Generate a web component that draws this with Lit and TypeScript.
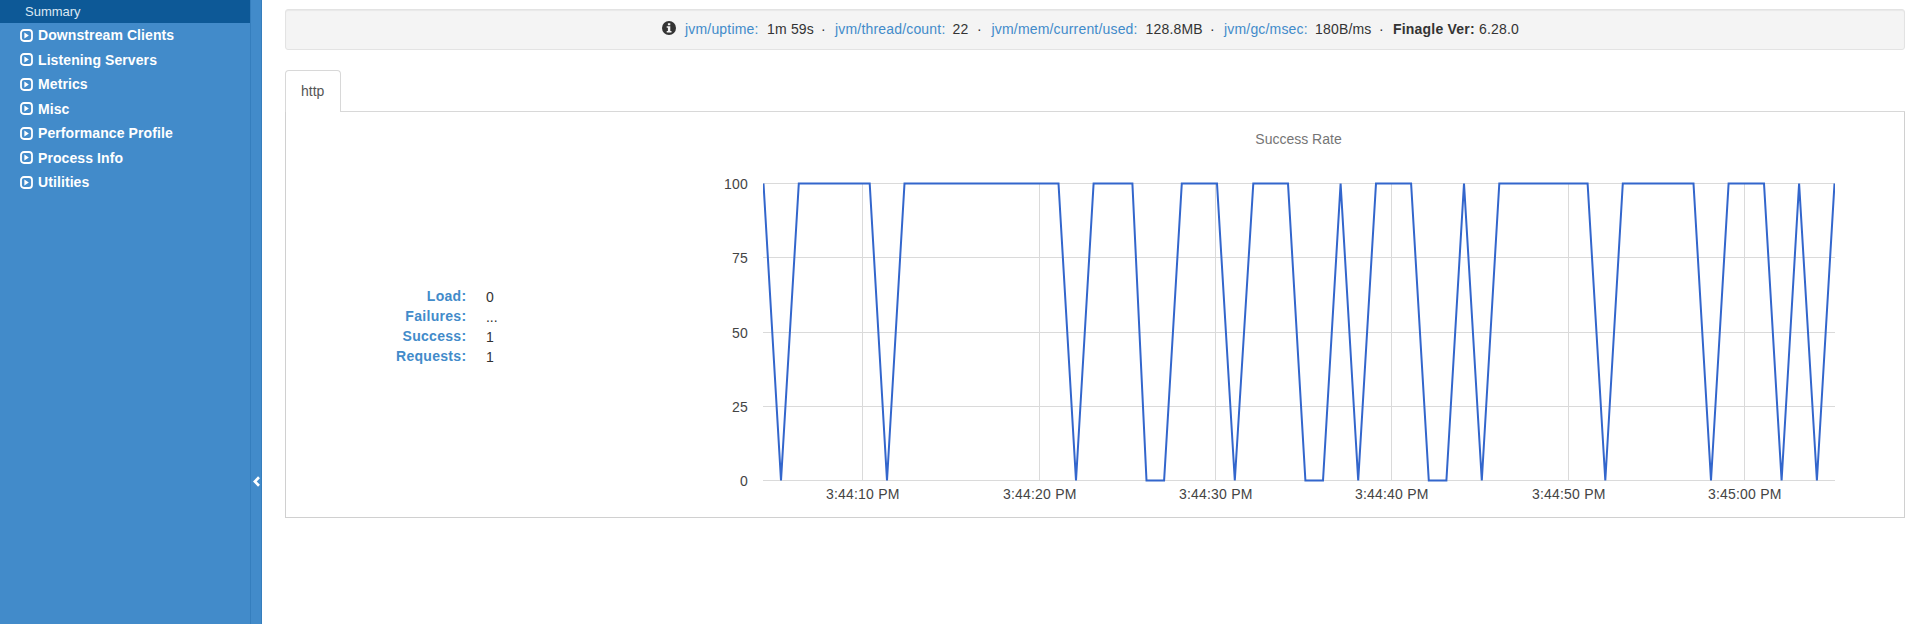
import { LitElement, html, svg, css } from "lit";

const TOP = 183.5;
const BOTTOM = 480.5;

/* [x, success rate] samples along the time axis */
const SAMPLES: [number, number][] = [
  [763.5, 100], [781, 0], [798.8, 100], [869.7, 100], [887, 0], [904.5, 100],
  [1058.5, 100], [1076, 0], [1093.6, 100], [1132.4, 100], [1146.5, 0], [1164.1, 0],
  [1181.8, 100], [1217, 100], [1234.8, 0], [1253.3, 100], [1288, 100], [1305.4, 0],
  [1323, 0], [1340.6, 100], [1358.2, 0], [1376, 100], [1411.1, 100], [1428.8, 0],
  [1446.4, 0], [1464, 100], [1481.8, 0], [1499.3, 100], [1587.6, 100], [1605.3, 0],
  [1622.8, 100], [1693.5, 100], [1711, 0], [1728.6, 100], [1764, 100], [1781.6, 0],
  [1799.1, 100], [1816.9, 0], [1834.5, 100],
];

const X_TICKS: [number, string][] = [
  [862.5, "3:44:10 PM"], [1039.5, "3:44:20 PM"], [1215.5, "3:44:30 PM"],
  [1391.5, "3:44:40 PM"], [1568.5, "3:44:50 PM"], [1744.5, "3:45:00 PM"],
];
const Y_TICKS: [number, string][] = [
  [183.5, "100"], [257.5, "75"], [332.5, "50"], [406.5, "25"], [480.5, "0"],
];

class SideBar extends LitElement {
  static styles = css`
    :host { display: flex; width: 262px; flex: none; background: #428bca; color: #fff; }
    nav { width: 250px; }
    .current {
      height: 23px; background: #0d5997; color: #dce8f3; box-sizing: border-box;
      padding-left: 25px; font-size: 13px; line-height: 23px;
    }
    .items { padding-top: 0.2px; }
    .item {
      display: flex; align-items: center; height: 24.5px; padding-left: 20px; gap: 5px;
      font-size: 14px; font-weight: bold; letter-spacing: 0.09px; line-height: 24px;
    }
    .item svg { display: block; width: 13px; height: 13px; flex: none; }
    .toggle {
      box-sizing: border-box; width: 12px; border-left: 1px solid #357ebd;
      border-right: 1px solid #357ebd; padding: 476px 0 0 2px;
    }
    .toggle svg { display: block; width: 7px; height: 11px; }
  `;
  render() {
    const groups = ["Downstream Clients", "Listening Servers", "Metrics", "Misc",
      "Performance Profile", "Process Info", "Utilities"];
    return html`
      <nav>
        <div class="current">Summary</div>
        <div class="items">
          ${groups.map((g) => html`
            <div class="item">
              <svg viewBox="0 0 13 13">
                <rect x="1" y="1" width="11" height="11" rx="3" fill="none" stroke="#fff" stroke-width="1.8" />
                <path d="M4.4 3.6 L8.8 6.5 L4.4 9.4 Z" fill="#fff" />
              </svg>
              <span>${g}</span>
            </div>`)}
        </div>
      </nav>
      <div class="toggle">
        <svg viewBox="0 0 7 11"><path d="M6 1.3 L1.8 5.5 L6 9.7" fill="none" stroke="#fff" stroke-width="2.7" /></svg>
      </div>`;
  }
}
customElements.define("side-bar", SideBar);

class StatBar extends LitElement {
  static styles = css`
    :host {
      box-sizing: border-box; height: 41px; border: 1px solid #e3e3e3; border-radius: 3px;
      background: #f4f4f4; box-shadow: inset 0 1px 1px rgba(0, 0, 0, 0.05);
      display: grid; align-items: center; padding-left: 376px; white-space: nowrap;
      grid-template-columns: 23px 82px 54px 14px 117.5px 24.5px 14.5px 154px 64.5px 14px 91px 64px 14px 86px 60px;
      font-size: 14px; line-height: 39px; letter-spacing: 0.18px; color: #333;
    }
    .key { color: #428bca; }
    .bold { font-weight: bold; letter-spacing: 0.2px; }
    svg { display: block; width: 14px; height: 14px; margin-top: -3px; }
  `;
  render() {
    const stats = [["jvm/uptime:", "1m 59s"], ["jvm/thread/count:", "22"],
      ["jvm/mem/current/used:", "128.8MB"], ["jvm/gc/msec:", "180B/ms"]];
    return html`
      <svg viewBox="0 0 14 14">
        <circle cx="7" cy="7" r="7" fill="#333" />
        <path d="M5.9 2.2h2.4v2h-2.4z M4.7 5.2h3.6v4.8h1.2v1.6h-4.8v-1.6h1.2v-3.2h-1.2z" fill="#f4f4f4" />
      </svg>
      ${stats.map(([k, v]) => html`<span class="key">${k}</span><span>${v}</span><span>·</span>`)}
      <span class="bold">Finagle Ver:</span><span>6.28.0</span>`;
  }
}
customElements.define("stat-bar", StatBar);

class SuccessChart extends LitElement {
  static styles = css`
    :host { display: block; }
    svg { display: block; width: 1200px; height: 405px; font-size: 14px; letter-spacing: 0.2px; }
    .grid { stroke: #dadada; stroke-width: 1; }
    .line { fill: none; stroke: #3366cc; stroke-width: 2; }
    .tick { fill: #444; }
    .title { fill: #757575; letter-spacing: 0; }
  `;
  render() {
    const points = SAMPLES
      .map(([x, v]) => `${x},${v === 100 ? TOP : BOTTOM}`)
      .join(" ");
    return html`
      <svg viewBox="700 112 1200 405">
        <defs><clipPath id="plot"><rect x="763" y="182" width="1072" height="300" /></clipPath></defs>
        <text class="title" x="1298.5" y="144" text-anchor="middle">Success Rate</text>
        ${X_TICKS.map(([x, t]) => svg`
          <line class="grid" x1=${x} x2=${x} y1="183" y2="481" />
          <text class="tick" x=${x + 0.3} y="499" text-anchor="middle">${t}</text>`)}
        ${Y_TICKS.map(([y, t]) => svg`
          <line class="grid" x1="763" x2="1835" y1=${y} y2=${y} />
          <text class="tick" x="748" y=${Math.floor(y) + 6} text-anchor="end">${t}</text>`)}
        <polyline class="line" points=${points} clip-path="url(#plot)" />
      </svg>`;
  }
}
customElements.define("success-chart", SuccessChart);

class AppRoot extends LitElement {
  static styles = css`
    :host {
      display: flex; height: 624px; overflow: hidden; background: #fff; color: #333;
      font-family: "Liberation Sans", Helvetica, Arial, sans-serif;
    }
    main { flex: 1; padding: 9px 15px 0 23px; }
    .tabs { display: flex; margin-top: 20px; }
    .tab {
      box-sizing: border-box; width: 56px; height: 42px; border: 1px solid #d8d8d8; border-bottom: 0;
      border-radius: 4px 4px 0 0; background: #fff; padding-left: 15px; font-size: 14px;
      line-height: 41px; color: #555;
    }
    .rest { flex: 1; border-bottom: 1px solid #d8d8d8; }
    .panel {
      box-sizing: border-box; height: 406px; display: flex;
      border: 1px solid #d0d0d0; border-top: 0;
    }
    .stats {
      width: 414px; flex: none; box-sizing: border-box; padding-top: 174px;
      display: grid; grid-template-columns: 180.4px 1fr; grid-auto-rows: 20px; column-gap: 19.6px;
      font-size: 14px; line-height: 20px;
    }
    .label { text-align: right; font-weight: bold; color: #428bca; letter-spacing: 0.3px; }
    .value { padding-top: 1px; }
  `;
  render() {
    const rows = [["Load:", "0"], ["Failures:", "..."], ["Success:", "1"], ["Requests:", "1"]];
    return html`
      <side-bar></side-bar>
      <main>
        <stat-bar></stat-bar>
        <div class="tabs"><div class="tab">http</div><div class="rest"></div></div>
        <div class="panel">
          <div class="stats">
            ${rows.map(([k, v]) => html`<div class="label">${k}</div><div class="value">${v}</div>`)}
          </div>
          <success-chart></success-chart>
        </div>
      </main>`;
  }
}
customElements.define("app-root", AppRoot);
